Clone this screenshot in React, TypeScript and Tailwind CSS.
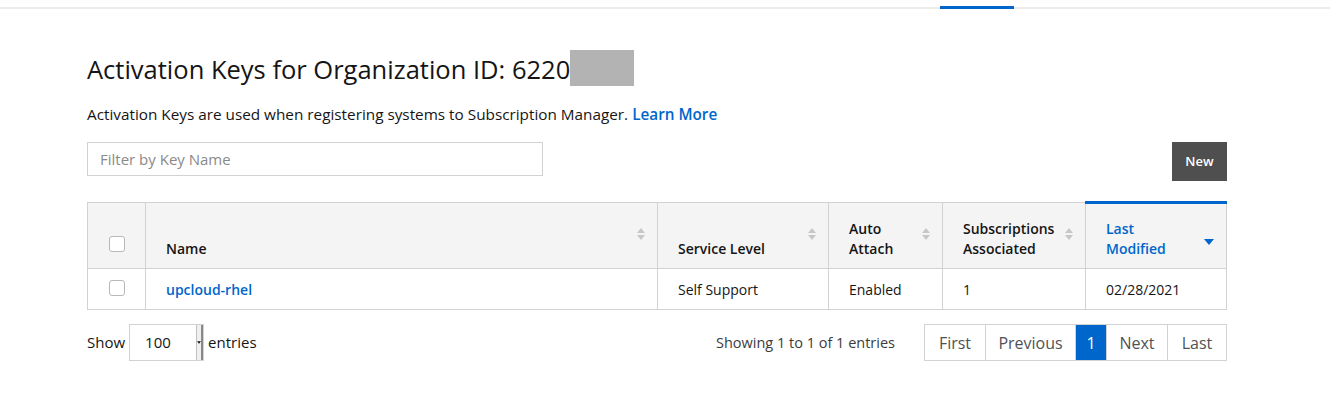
import React from "react";

const font = { fontFamily: '"Open Sans", "Liberation Sans", sans-serif' };

const SortIcon = ({ active }: { active?: boolean }) =>
    active ? (
        <svg width="10" height="6" viewBox="0 0 10 6" className="shrink-0">
            <path d="M0 0h10L5 6z" fill="#0066cc" />
        </svg>
    ) : (
        <svg width="8" height="14" viewBox="0 0 8 14" className="shrink-0">
            <path d="M0 6h8L4 1z M0 8h8L4 13z" fill="#c7c7c7" />
        </svg>
    );

const Checkbox = () => (
    <span className="block w-[16px] h-[16px] rounded-[3px] border border-[#b8b8b8] bg-white" />
);

interface HeadProps {
    label: React.ReactNode;
    width: string;
    active?: boolean;
}

const Head: React.FC<HeadProps> = ({ label, width, active }) => (
    <th
        className={`${width} border-l border-[#d2d2d2] align-bottom p-0 font-semibold ${
            active ? "border-t-[3px] border-t-[#0066cc]" : ""
        }`}
    >
        <div className="flex items-end justify-between pl-5 pr-3 pb-[9px]">
            <span
                className={`text-[14px] leading-[20px] text-left ${
                    active ? "text-[#0066cc]" : "text-[#151515]"
                }`}
            >
                {label}
            </span>
            <span className={active ? "mb-[14px]" : "mb-[18px]"}>
                <SortIcon active={active} />
            </span>
        </div>
    </th>
);

const pages = [
    { label: "First", w: "w-[60px]" },
    { label: "Previous", w: "w-[90px]" },
    { label: "1", w: "w-[31px]" },
    { label: "Next", w: "w-[61px]" },
    { label: "Last", w: "w-[59px]" },
];

export default function App() {
    return (
        <div className="min-h-[398px] bg-white text-[#151515]" style={font}>
            <div className="flex h-[9px] border-b-2 border-[#ececec]">
                <div className="ml-[940px] w-[74px] mt-[6px] h-[3px] bg-[#0066cc]" />
            </div>
            <div className="pl-[87px] pr-[103px] pt-[39px]">
                <div className="flex items-center">
                    <h1 className="text-[25.5px] leading-[36px] pt-[3px]">
                        Activation Keys for Organization ID: 6220
                    </h1>
                    <span className="w-[64px] h-[36px] bg-[#b3b3b3]" />
                </div>
                <p className="mt-[16px] text-[15.3px] leading-[22px]">
                    Activation Keys are used when registering systems to
                    Subscription Manager.{" "}
                    <a className="text-[#0066cc] font-semibold">Learn More</a>
                </p>
                <div className="mt-[17px] flex items-start justify-between">
                    <input
                        className="w-[456px] h-[34px] border border-[#d2d2d2] px-3 text-[15px] placeholder:text-[#8a8a8a] outline-none"
                        placeholder="Filter by Key Name"
                        style={font}
                    />
                    <button className="w-[55px] h-[39px] bg-[#4f4f4f] text-white text-[13px] font-semibold">
                        New
                    </button>
                </div>
                <table className="mt-[20px] w-full table-fixed border border-[#d2d2d2] border-collapse">
                    <thead className="bg-[#f4f4f4]">
                        <tr className="h-[66px]">
                            <th className="w-[58px] align-bottom p-0">
                                <div className="flex justify-center pb-[16px]">
                                    <Checkbox />
                                </div>
                            </th>
                            <Head label="Name" width="w-[512px]" />
                            <Head label="Service Level" width="w-[171px]" />
                            <Head
                                label={
                                    <>
                                        Auto
                                        <br />
                                        Attach
                                    </>
                                }
                                width="w-[114px]"
                            />
                            <Head
                                label={
                                    <>
                                        Subscriptions
                                        <br />
                                        Associated
                                    </>
                                }
                                width="w-[143px]"
                            />
                            <Head
                                label={
                                    <>
                                        Last
                                        <br />
                                        Modified
                                    </>
                                }
                                width="w-[141px]"
                                active
                            />
                        </tr>
                    </thead>
                    <tbody>
                        <tr className="h-[41px] border-t border-[#d2d2d2] text-[14px]">
                            <td className="p-0">
                                <div className="flex justify-center -mt-[3px]">
                                    <Checkbox />
                                </div>
                            </td>
                            <td className="border-l border-[#d2d2d2] pl-5">
                                <a className="text-[#0066cc] font-semibold">
                                    upcloud-rhel
                                </a>
                            </td>
                            <td className="border-l border-[#d2d2d2] pl-5">
                                Self Support
                            </td>
                            <td className="border-l border-[#d2d2d2] pl-5">
                                Enabled
                            </td>
                            <td className="border-l border-[#d2d2d2] pl-5">1</td>
                            <td className="border-l border-[#d2d2d2] pl-5">
                                02/28/2021
                            </td>
                        </tr>
                    </tbody>
                </table>
                <div className="mt-[14px] flex items-center justify-between">
                    <div className="flex items-center gap-[4px] text-[15px]">
                        <span>Show</span>
                        <div className="flex h-[37px] w-[75px] border border-[#d2d2d2]">
                            <span className="flex-1 flex items-center pl-[15px]">
                                100
                            </span>
                            <span className="w-[7px] flex items-center justify-center border-l border-[#c0c0c0] bg-[#f0f0f0] border-r-2 border-r-[#888]">
                                <svg width="5" height="3" viewBox="0 0 5 3">
                                    <path d="M0 0h5L2.5 3z" fill="#151515" />
                                </svg>
                            </span>
                        </div>
                        <span>entries</span>
                    </div>
                    <div className="flex items-center">
                        <span className="text-[14.5px] text-[#3c3c3c] mr-[29px]">
                            Showing 1 to 1 of 1 entries
                        </span>
                        <div className="flex border border-[#d2d2d2] h-[37px] text-[16px]">
                            {pages.map((p, i) => (
                                <span
                                    key={p.label}
                                    className={`${p.w} flex items-center justify-center ${
                                        i > 0 ? "border-l border-[#d2d2d2]" : ""
                                    } ${
                                        p.label === "1"
                                            ? "bg-[#0066cc] text-white"
                                            : "text-[#4f5255]"
                                    }`}
                                >
                                    {p.label}
                                </span>
                            ))}
                        </div>
                    </div>
                </div>
            </div>
        </div>
    );
}
